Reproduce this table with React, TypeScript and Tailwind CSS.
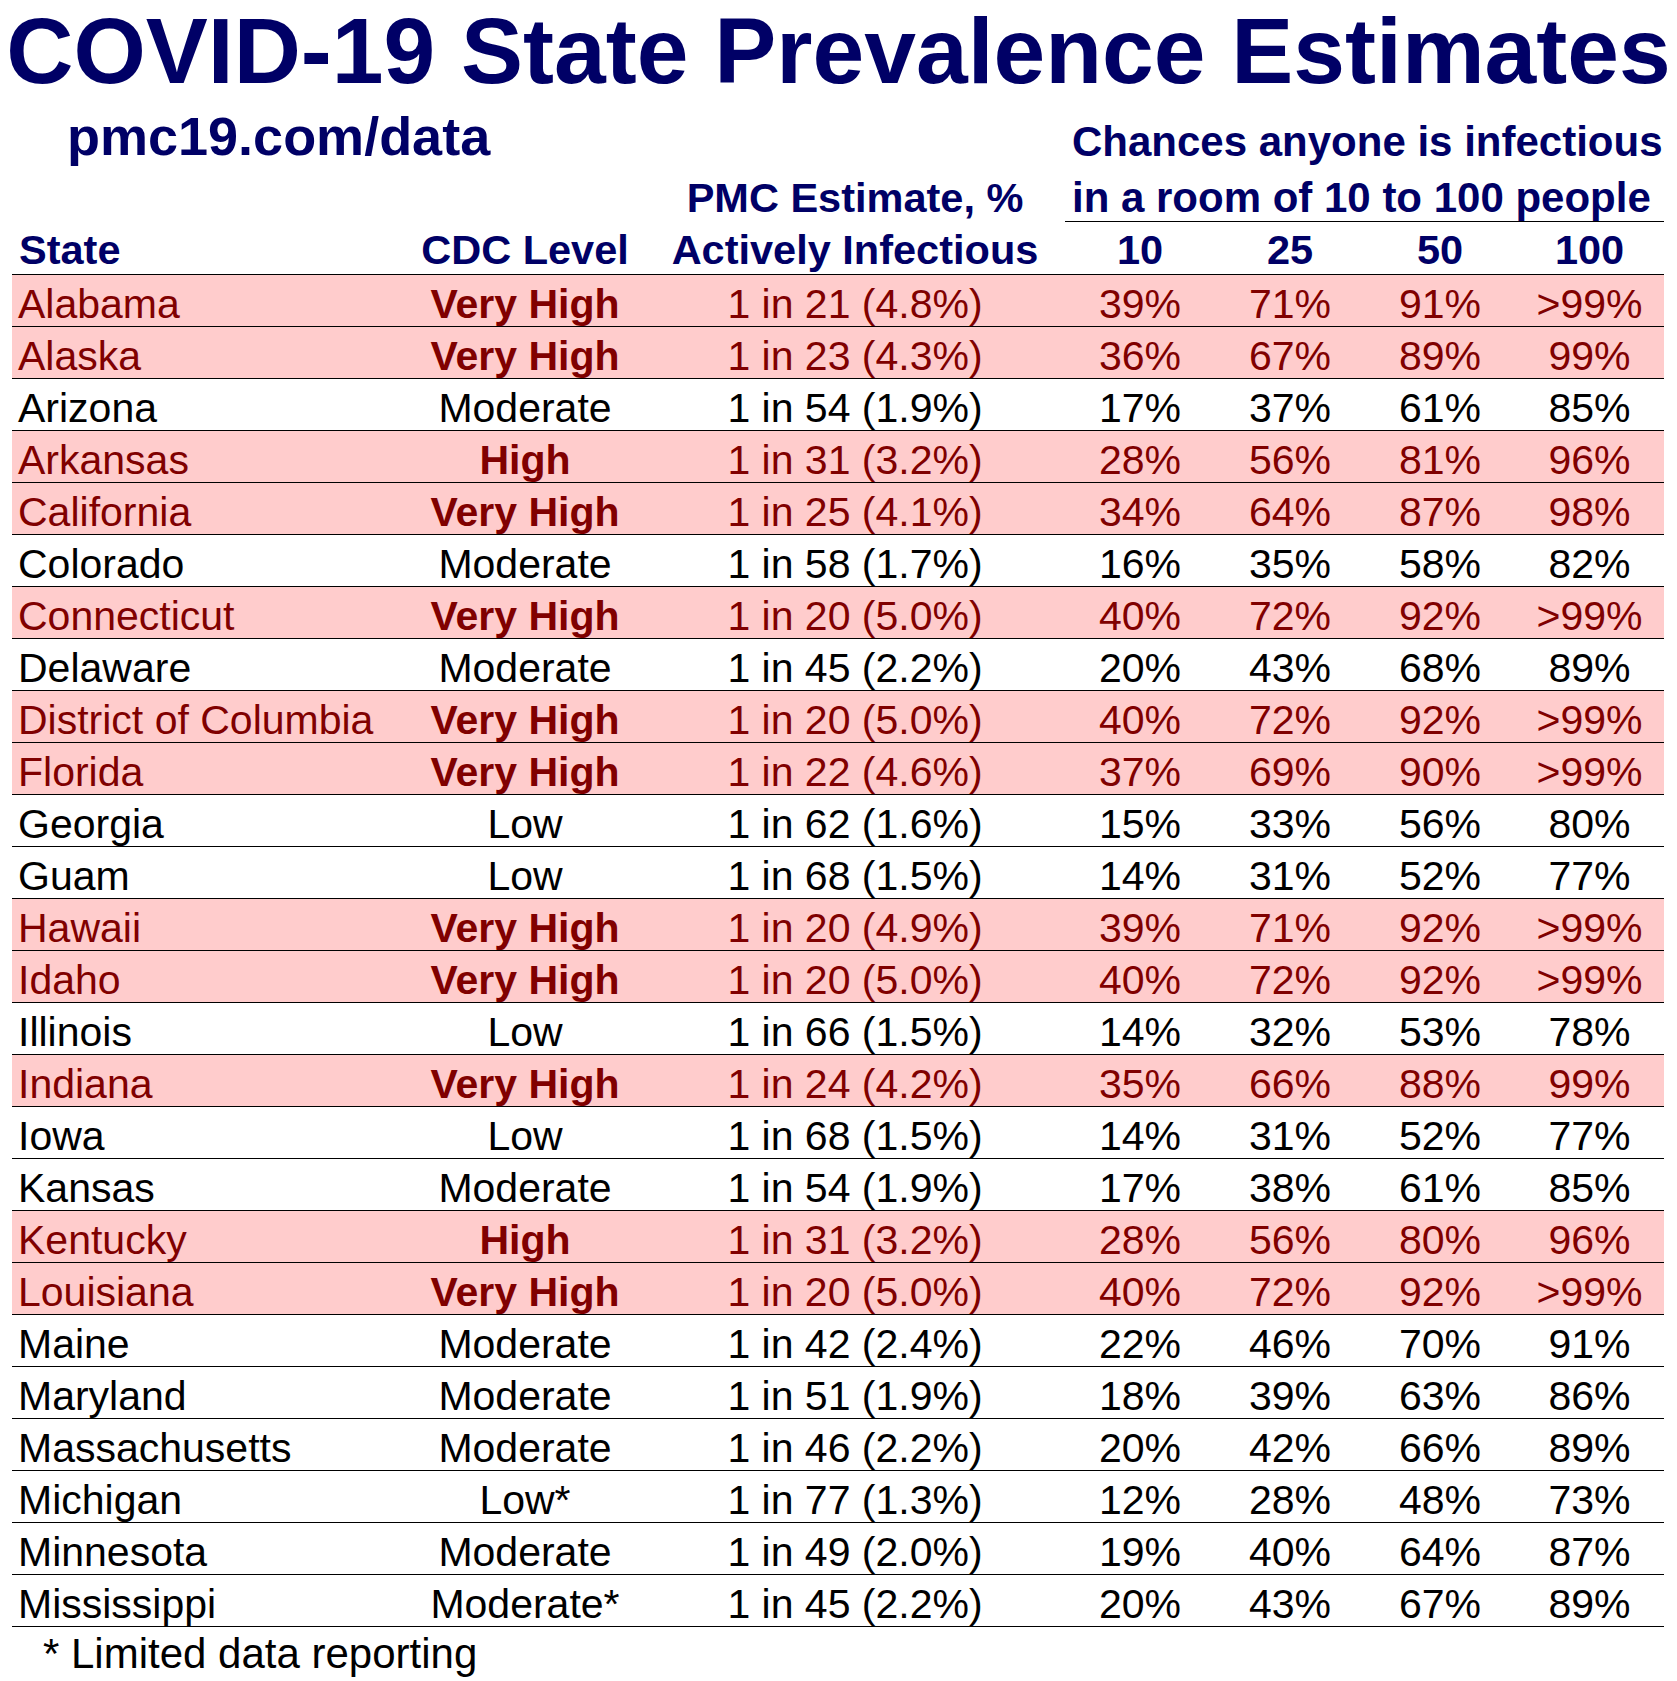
const rows: [string, string, string, string, string, string, string][] = [
  ["Alabama", "Very High", "1 in 21 (4.8%)", "39%", "71%", "91%", ">99%"],
  ["Alaska", "Very High", "1 in 23 (4.3%)", "36%", "67%", "89%", "99%"],
  ["Arizona", "Moderate", "1 in 54 (1.9%)", "17%", "37%", "61%", "85%"],
  ["Arkansas", "High", "1 in 31 (3.2%)", "28%", "56%", "81%", "96%"],
  ["California", "Very High", "1 in 25 (4.1%)", "34%", "64%", "87%", "98%"],
  ["Colorado", "Moderate", "1 in 58 (1.7%)", "16%", "35%", "58%", "82%"],
  ["Connecticut", "Very High", "1 in 20 (5.0%)", "40%", "72%", "92%", ">99%"],
  ["Delaware", "Moderate", "1 in 45 (2.2%)", "20%", "43%", "68%", "89%"],
  ["District of Columbia", "Very High", "1 in 20 (5.0%)", "40%", "72%", "92%", ">99%"],
  ["Florida", "Very High", "1 in 22 (4.6%)", "37%", "69%", "90%", ">99%"],
  ["Georgia", "Low", "1 in 62 (1.6%)", "15%", "33%", "56%", "80%"],
  ["Guam", "Low", "1 in 68 (1.5%)", "14%", "31%", "52%", "77%"],
  ["Hawaii", "Very High", "1 in 20 (4.9%)", "39%", "71%", "92%", ">99%"],
  ["Idaho", "Very High", "1 in 20 (5.0%)", "40%", "72%", "92%", ">99%"],
  ["Illinois", "Low", "1 in 66 (1.5%)", "14%", "32%", "53%", "78%"],
  ["Indiana", "Very High", "1 in 24 (4.2%)", "35%", "66%", "88%", "99%"],
  ["Iowa", "Low", "1 in 68 (1.5%)", "14%", "31%", "52%", "77%"],
  ["Kansas", "Moderate", "1 in 54 (1.9%)", "17%", "38%", "61%", "85%"],
  ["Kentucky", "High", "1 in 31 (3.2%)", "28%", "56%", "80%", "96%"],
  ["Louisiana", "Very High", "1 in 20 (5.0%)", "40%", "72%", "92%", ">99%"],
  ["Maine", "Moderate", "1 in 42 (2.4%)", "22%", "46%", "70%", "91%"],
  ["Maryland", "Moderate", "1 in 51 (1.9%)", "18%", "39%", "63%", "86%"],
  ["Massachusetts", "Moderate", "1 in 46 (2.2%)", "20%", "42%", "66%", "89%"],
  ["Michigan", "Low*", "1 in 77 (1.3%)", "12%", "28%", "48%", "73%"],
  ["Minnesota", "Moderate", "1 in 49 (2.0%)", "19%", "40%", "64%", "87%"],
  ["Mississippi", "Moderate*", "1 in 45 (2.2%)", "20%", "43%", "67%", "89%"],
]

const cols = "grid w-[1652px] grid-cols-[393px_240px_420px_150px_150px_150px_149px]"

export default function App() {
  return (
    <div className="w-[1677px] h-[1681px] bg-white font-['Liberation_Sans',Arial,sans-serif] overflow-hidden">
      <h1 className="h-[95px] text-center text-[93px] leading-[102px] font-bold text-[#000066] whitespace-nowrap">
        COVID-19 State Prevalence Estimates
      </h1>

      <div className="ml-[12px]">
        {/* header block above the table */}
        <div className={cols}>
          <div className="col-span-3 pl-[55px] pt-[15px] text-[54px] leading-[53px] font-bold text-[#000066]">
            pmc19.com/data
          </div>
          <div className="col-span-4 pl-[7px] pt-[26px] text-[42px] leading-[41px] font-bold text-[#000066] whitespace-nowrap">
            Chances anyone is infectious
          </div>
        </div>
        <div className={cols}>
          <div className="col-start-3 pt-[14px] text-center text-[41.5px] leading-[41px] font-bold text-[#000066] whitespace-nowrap">
            PMC Estimate, %
          </div>
          <div className="col-span-4 pl-[7px] pt-[14px] pb-[3px] border-b border-black text-[42px] leading-[41px] font-bold text-[#000066] whitespace-nowrap">
            in a room of 10 to 100 people
          </div>
        </div>
        <div className={`${cols} pt-[7px] pb-[4px] border-b border-black text-[41.5px] leading-[41px] font-bold text-[#000066]`}>
          <div className="pl-[7px]">State</div>
          <div className="text-center">CDC Level</div>
          <div className="text-center whitespace-nowrap">Actively Infectious</div>
          <div className="text-center">10</div>
          <div className="text-center">25</div>
          <div className="text-center">50</div>
          <div className="text-center">100</div>
        </div>

        {rows.map((r) => {
          const hot = r[1] === "Very High" || r[1] === "High"
          return (
            <div
              key={r[0]}
              className={`${cols} h-[52px] pt-[8px] border-b border-black text-[41px] leading-[42px] whitespace-nowrap ${
                hot ? "bg-[#ffcccc] text-[#800000]" : "text-black"
              }`}
            >
              <div className="pl-[6px]">{r[0]}</div>
              <div className={`text-center ${hot ? "font-bold" : ""}`}>{r[1]}</div>
              <div className="text-center">{r[2]}</div>
              <div className="text-center">{r[3]}</div>
              <div className="text-center">{r[4]}</div>
              <div className="text-center">{r[5]}</div>
              <div className="text-center">{r[6]}</div>
            </div>
          )
        })}

        <div className="pl-[31px] pt-[6px] text-[42px] leading-[42px] text-black">* Limited data reporting</div>
      </div>
    </div>
  )
}
